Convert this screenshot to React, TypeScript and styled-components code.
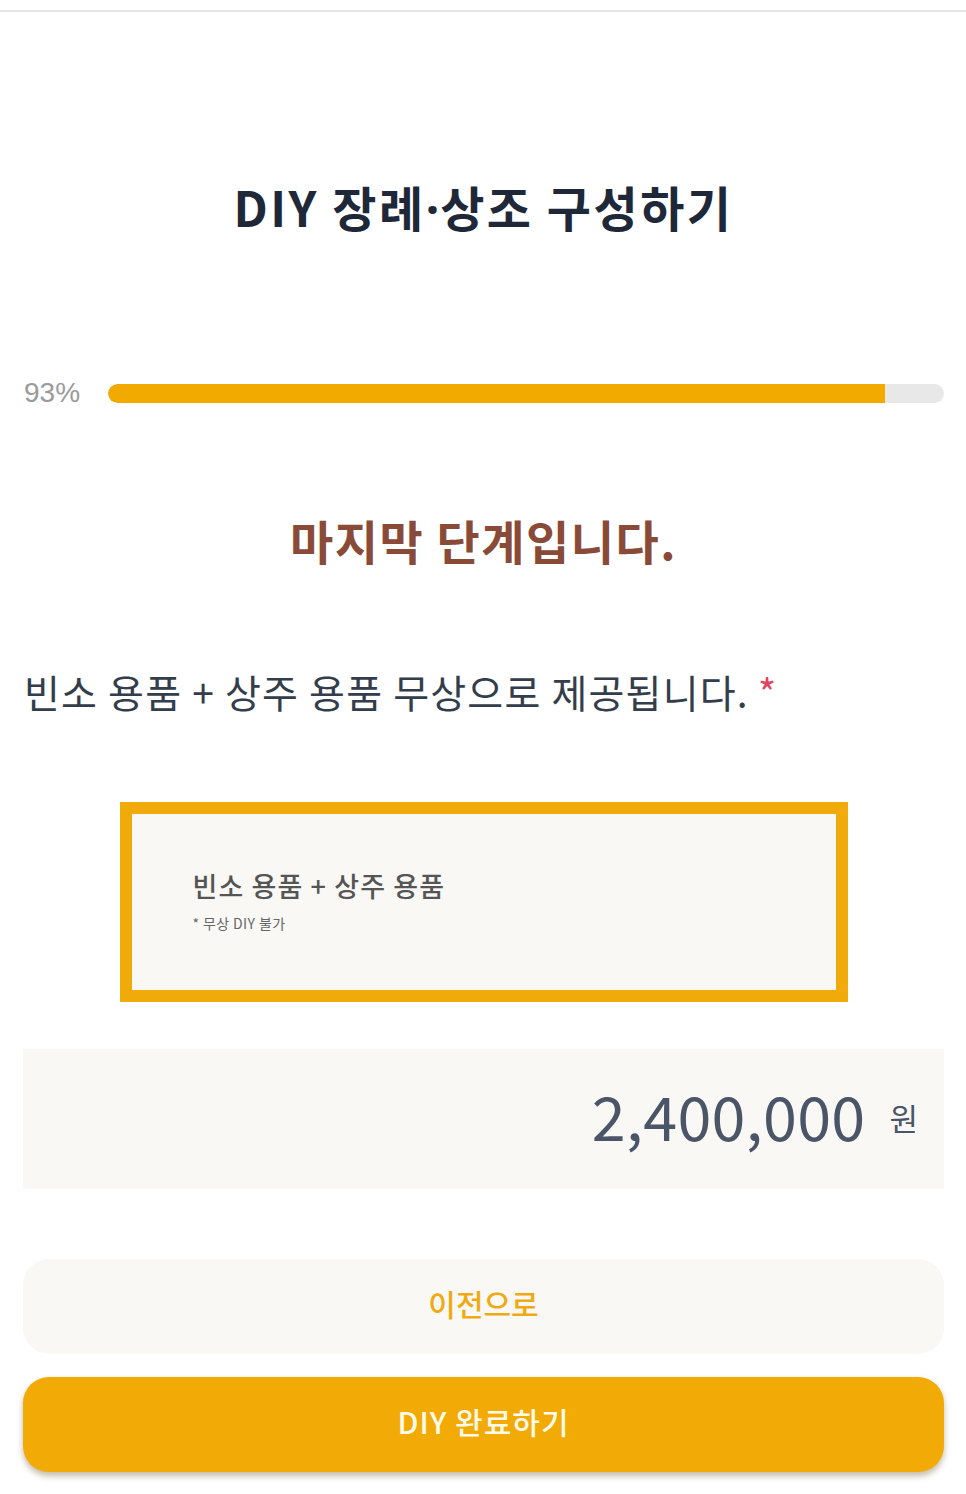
import React from "react";
import styled, { createGlobalStyle } from "styled-components";

const Global = createGlobalStyle`
  html, body { margin: 0; padding: 0; background: #ffffff; }
  body { font-family: "Noto Sans CJK KR", "Noto Sans", sans-serif; }
  * { box-sizing: border-box; }
`;

const Page = styled.div`
  width: 966px;
  min-height: 1494px;
  background: #ffffff;
`;

const TopRule = styled.div`
  height: 12px;
  border-bottom: 2px solid #e6e6e6;
`;

const Content = styled.main`
  padding: 0 22px 0 23px;
  display: flex;
  flex-direction: column;
`;

const Title = styled.h1`
  margin: 160px 0 0;
  text-align: center;
  font-size: 48px;
  font-weight: 700;
  line-height: 68px;
  color: #1e2838;
  letter-spacing: 2.5px;
`;

const Dot = styled.span`
  font-family: "Noto Sans", "DejaVu Sans", sans-serif;
  letter-spacing: 1px;
`;

const ProgressRow = styled.div`
  margin-top: 134px;
  display: flex;
  align-items: center;
  gap: 24px;
`;

const Percent = styled.span`
  font-family: "Liberation Sans", Arial, sans-serif;
  font-size: 28px;
  color: #9a9a9a;
  width: 60px;
  margin-left: 1px;
`;

const Track = styled.div`
  flex: 1;
  height: 19px;
  border-radius: 10px;
  background: #e8e8e8;
  overflow: hidden;
`;

const Fill = styled.div`
  height: 100%;
  background: #f2a900;
  border-radius: 10px 0 0 10px;
`;

const StepTitle = styled.h2`
  margin: 98px 0 0;
  text-align: center;
  font-size: 47px;
  font-weight: 700;
  line-height: 66px;
  color: #8a4a38;
  letter-spacing: 1.5px;
`;

const Question = styled.p`
  margin: 90px 0 0 1px;
  font-size: 39px;
  font-weight: 400;
  line-height: 56px;
  color: #333d4b;
  letter-spacing: 1.2px;
`;

const Required = styled.span`
  color: #e0435f;
  margin-left: 9px;
`;

const Option = styled.div`
  margin: 83px auto 0;
  width: 728px;
  height: 200px;
  border: 12px solid #f0aa0a;
  background: #f9f8f5;
  padding: 54px 0 0 61px;
  display: flex;
  flex-direction: column;
`;

const OptionLabel = styled.div`
  font-size: 27px;
  font-weight: 500;
  line-height: 36px;
  color: #555555;
  letter-spacing: 1.1px;
`;

const OptionNote = styled.div`
  margin-top: 10px;
  font-size: 14px;
  line-height: 18px;
  color: #666666;
  letter-spacing: 0.4px;
`;

const PriceBox = styled.div`
  margin-top: 47px;
  height: 140px;
  background: #f9f8f5;
  display: flex;
  justify-content: flex-end;
  align-items: center;
  padding: 0 26px 10px 0;
  gap: 24px;
`;

const Amount = styled.span`
  font-size: 61px;
  font-weight: 400;
  color: #4a5568;
  letter-spacing: 0.3px;
`;

const Unit = styled.span`
  font-size: 31px;
  color: #4a5568;
  margin-top: 6px;
`;

const Button = styled.button<{ $primary?: boolean }>`
  width: 100%;
  height: 95px;
  border: none;
  border-radius: 26px;
  padding: 0 0 7px;
  font-family: "Noto Sans CJK KR", "Noto Sans", sans-serif;
  font-size: 30px;
  font-weight: 500;
  letter-spacing: ${(p) => (p.$primary ? "1px" : "0px")};
  background: ${(p) => (p.$primary ? "#f2ab06" : "#f9f8f5")};
  color: ${(p) => (p.$primary ? "#fffbea" : "#efaa12")};
  box-shadow: ${(p) => (p.$primary ? "0 4px 6px rgba(90, 60, 0, 0.35)" : "none")};
  cursor: pointer;
`;

const Buttons = styled.div`
  margin-top: 70px;
  display: flex;
  flex-direction: column;
  gap: 23px;
`;

export default function App() {
  const progress = 93;
  return (
    <Page>
      <Global />
      <TopRule />
      <Content>
        <Title>
          DIY 장례<Dot>·</Dot>상조 구성하기
        </Title>
        <ProgressRow>
          <Percent>{progress}%</Percent>
          <Track>
            <Fill style={{ width: `${progress}%` }} />
          </Track>
        </ProgressRow>
        <StepTitle>마지막 단계입니다.</StepTitle>
        <Question>
          빈소 용품 + 상주 용품 무상으로 제공됩니다.<Required>*</Required>
        </Question>
        <Option>
          <OptionLabel>빈소 용품 + 상주 용품</OptionLabel>
          <OptionNote>* 무상 DIY 불가</OptionNote>
        </Option>
        <PriceBox>
          <Amount>2,400,000</Amount>
          <Unit>원</Unit>
        </PriceBox>
        <Buttons>
          <Button>이전으로</Button>
          <Button $primary>DIY 완료하기</Button>
        </Buttons>
      </Content>
    </Page>
  );
}
